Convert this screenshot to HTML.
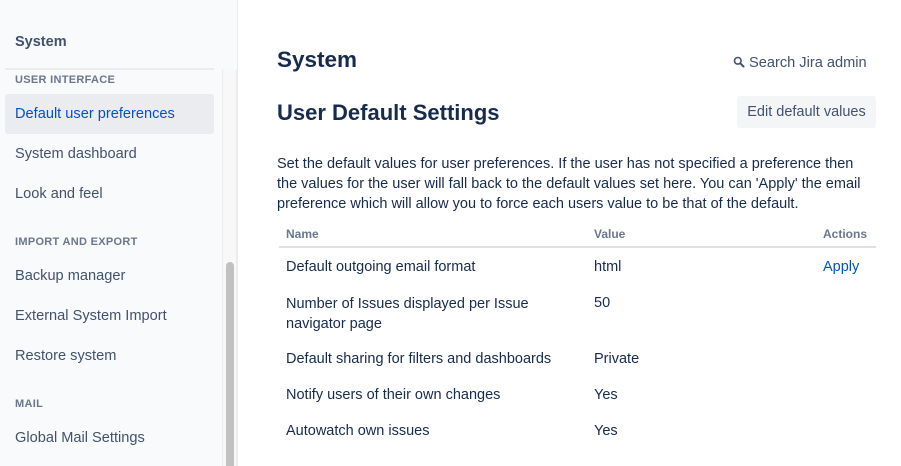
<!DOCTYPE html>
<html><head><style>
*{margin:0;padding:0;box-sizing:border-box}
body{width:901px;height:466px;overflow:hidden;background:#fff;font-family:"Liberation Sans",sans-serif;position:relative;color:#172b4d}
.a{position:absolute;white-space:nowrap}
#side{position:absolute;left:0;top:0;width:238px;height:466px;background:#f9fafb;border-right:1px solid #ebecf0}
.nav{font-size:14.6px;color:#42526e}
.hd{font-size:11px;font-weight:bold;color:#6b778c;letter-spacing:.3px}
.td{font-size:14.5px;color:#172b4d}
</style></head><body>
<div id="side">
<div class="a" style="left:15px;top:34px;font-size:14.5px;font-weight:bold;color:#42526e">System</div>
<div class="a" style="left:5px;top:68px;width:209px;height:2px;background:#ebecf0"></div>
<div class="a" style="left:222px;top:69px;width:15px;height:397px;background:#f8f8f8;border-left:1px solid #ececec;border-right:1px solid #ececec"></div>
<div class="a" style="left:226px;top:262px;width:8px;height:204px;background:#c1c1c1;border-radius:4px 4px 0 0"></div>
<div class="a hd" style="left:15px;top:74px">USER INTERFACE</div>
<div class="a" style="left:5px;top:94px;width:209px;height:40px;background:#ebecf0;border-radius:3px"></div>
<div class="a nav" style="left:15px;top:106px;color:#0052cc">Default user preferences</div>
<div class="a nav" style="left:15px;top:146px">System dashboard</div>
<div class="a nav" style="left:15px;top:186px">Look and feel</div>
<div class="a hd" style="left:15px;top:236px">IMPORT AND EXPORT</div>
<div class="a nav" style="left:15px;top:268px">Backup manager</div>
<div class="a nav" style="left:15px;top:308px">External System Import</div>
<div class="a nav" style="left:15px;top:348px">Restore system</div>
<div class="a hd" style="left:15px;top:398px">MAIL</div>
<div class="a nav" style="left:15px;top:430px">Global Mail Settings</div>
</div>
<div class="a" style="left:277px;top:47px;font-size:22.5px;font-weight:bold;color:#172b4d">System</div>
<div class="a" style="left:733px;top:55px;font-size:14.6px;color:#42526e"><svg width="12" height="12" viewBox="0 0 12 12" style="vertical-align:-1px;margin-right:4px"><circle cx="4.8" cy="4.8" r="3.3" fill="none" stroke="#42526e" stroke-width="1.6"/><path d="M7.3 7.3L10.5 10.5" stroke="#42526e" stroke-width="2" stroke-linecap="round"/></svg>Search Jira admin</div>
<div class="a" style="left:277px;top:100px;font-size:22px;font-weight:bold;color:#172b4d">User Default Settings</div>
<div class="a" style="left:737px;top:96px;width:139px;height:32px;background:#f4f5f7;border-radius:3px;font-size:14.5px;color:#42526e;text-align:center;line-height:32px">Edit default values</div>
<div class="a" style="left:277px;top:154px;font-size:14.5px;line-height:20px;color:#172b4d;white-space:nowrap">Set the default values for user preferences. If the user has not specified a preference then<br>the values for the user will fall back to the default values set here. You can 'Apply' the email<br>preference which will allow you to force each users value to be that of the default.</div>
<div class="a" style="left:286px;top:227px;font-size:12px;font-weight:bold;color:#6b778c">Name</div>
<div class="a" style="left:594px;top:227px;font-size:12px;font-weight:bold;color:#6b778c">Value</div>
<div class="a" style="left:823px;top:227px;font-size:12px;font-weight:bold;color:#6b778c">Actions</div>
<div class="a" style="left:279px;top:246px;width:597px;height:2px;background:#dfe1e6"></div>
<div class="a td" style="left:286px;top:259px">Default outgoing email format</div>
<div class="a td" style="left:594px;top:259px">html</div>
<div class="a td" style="left:823px;top:259px;color:#0052cc">Apply</div>
<div class="a td" style="left:286px;top:294px;line-height:20px">Number of Issues displayed per Issue<br>navigator page</div>
<div class="a td" style="left:594px;top:295px">50</div>
<div class="a td" style="left:286px;top:351px">Default sharing for filters and dashboards</div>
<div class="a td" style="left:594px;top:351px">Private</div>
<div class="a td" style="left:286px;top:387px">Notify users of their own changes</div>
<div class="a td" style="left:594px;top:387px">Yes</div>
<div class="a td" style="left:286px;top:423px">Autowatch own issues</div>
<div class="a td" style="left:594px;top:423px">Yes</div>
</body></html>
